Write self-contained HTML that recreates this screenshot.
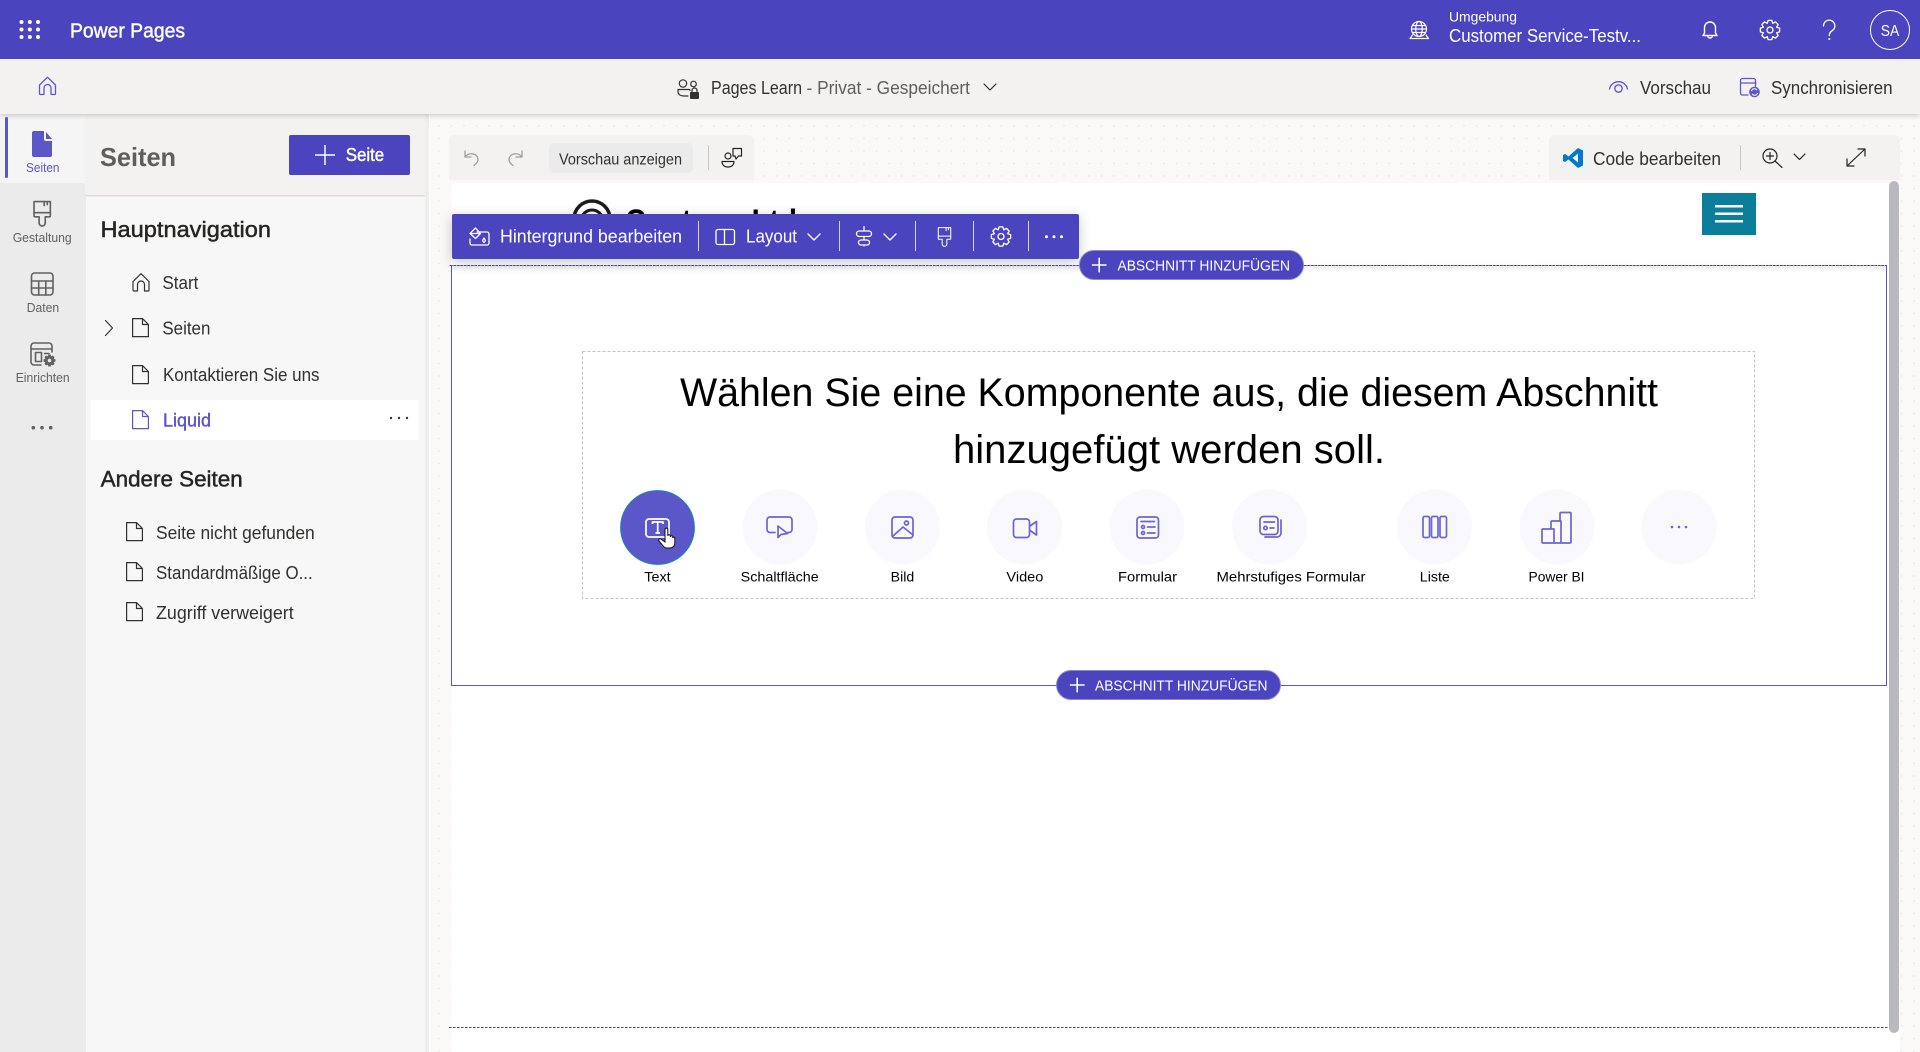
<!DOCTYPE html>
<html lang="de">
<head>
<meta charset="utf-8">
<title>Power Pages</title>
<style>
html,body{margin:0;padding:0;width:1920px;height:1052px;overflow:hidden;background:#fff}
svg{display:block}
text{font-family:"Liberation Sans",sans-serif;white-space:pre}
.s{stroke:currentColor;stroke-width:.45px}
.w{fill:none;stroke:#fff;stroke-width:1.3;stroke-linecap:round;stroke-linejoin:round}
.g{fill:none;stroke:#616161;stroke-width:1.6;stroke-linecap:round;stroke-linejoin:round}
.p{fill:none;stroke:#6a67d0;stroke-width:1.7;stroke-linecap:round;stroke-linejoin:round}
.b{fill:none;stroke:#5b57c8;stroke-width:1.3;stroke-linecap:round;stroke-linejoin:round}
.k{fill:none;stroke:#323130;stroke-width:1.2;stroke-linecap:round;stroke-linejoin:round}
.l{font-size:14px;fill:#000}
.n{font-size:18px;fill:#323130}
.r{font-size:13px;fill:#616161}
</style>
</head>
<body>
<svg xmlns="http://www.w3.org/2000/svg" width="1920" height="1052" viewBox="0 0 1920 1052">
<defs>
<pattern id="dots" width="12.5" height="12.5" patternUnits="userSpaceOnUse"><circle cx="1.5" cy="1" r=".9" fill="#e9e8e6"/></pattern>
<linearGradient id="fade" x1="0" y1="0" x2="0" y2="1"><stop offset="0" stop-color="#000" stop-opacity=".07"/><stop offset="1" stop-color="#000" stop-opacity="0"/></linearGradient>
<path id="gear" d="M9.62 -1.87L9.62 1.87 6.65 2.76 8.12 5.48 5.48 8.12 2.76 6.65 1.87 9.62 -1.87 9.62 -2.76 6.65 -5.48 8.12 -8.12 5.48 -6.65 2.76 -9.62 1.87 -9.62 -1.87 -6.65 -2.76 -8.12 -5.48 -5.48 -8.12 -2.76 -6.65 -1.87 -9.62 1.87 -9.62 2.76 -6.65 5.48 -8.12 8.12 -5.48 6.65 -2.76Z"/>
<path id="doc" d="M.6 .6H10.5L16.4 6.5V18.6H.6ZM10.5 .6V6.5H16.4"/>
<path id="home" d="M.5 8.5L8.5 .7 16.5 8.5V17a1 1 0 0 1-1 1H12V11.5a3.5 3.5 0 0 0-7 0V18H1.5a1 1 0 0 1-1-1Z"/>
<path id="brush" d="M1 1H17V15a1 1 0 0 1-1 1H12V22a3 3 0 0 1-6 0V16H2a1 1 0 0 1-1-1ZM1 12H17M11 1V5M14 1V4"/>
</defs>

<!-- canvas -->
<rect x="430" y="114" width="1490" height="938" fill="#faf9f8"/>
<rect x="430" y="114" width="1490" height="938" fill="url(#dots)"/>

<!-- canvas toolbars -->
<path d="M449 180V141a6 6 0 0 1 6-6H748a6 6 0 0 1 6 6V180Z" fill="#f3f2f1"/>
<path d="M1549 180V141a6 6 0 0 1 6-6H1894a6 6 0 0 1 6 6V180Z" fill="#f3f2f1"/>
<g fill="none" stroke="#a19f9d" stroke-width="1.3" stroke-linecap="round" stroke-linejoin="round">
<path d="M465 151v6h6M465 157c4-5 12-4 13 2 .4 3-2 5-4 6.500"/>
<path d="M522 151v6h-6M522 157c-4-5-12-4-13 2-.4 3 2 5 4 6.500"/>
</g>
<rect x="549" y="143" width="144" height="30" rx="5" fill="#ebebeb"/>
<text x="559" y="164.500" font-size="16" fill="#323130" textLength="123" lengthAdjust="spacingAndGlyphs">Vorschau anzeigen</text>
<rect x="708" y="145" width="1" height="25" fill="#c8c6c4"/>
<g class="k" style="stroke:#252423">
<circle cx="728" cy="156" r="3"/><path d="M722 161.500h12c0 3.500-2.500 5.500-6 5.500s-6-2-6-5.500Z"/>
<path d="M733 148.500h8.500v7.500h-3l-2.500 3-1-3h-2Z"/>
</g>
<path fill="#007acc" fill-rule="evenodd" d="M1578 148L1583 150.500V165.500L1578 168 1568.500 159.500 1565 162 1563 161V155L1565 154 1568.500 156.500ZM1578 153.500L1572.500 158 1578 162.500Z"/>
<text x="1593" y="165" font-size="18" fill="#323130" textLength="128" lengthAdjust="spacingAndGlyphs">Code bearbeiten</text>
<rect x="1740" y="145" width="1" height="25" fill="#c8c6c4"/>
<g class="k" style="stroke:#252423">
<circle cx="1770" cy="156" r="7"/><path d="M1775 161L1782 167.500M1770 152.500v7M1766.500 156h7"/>
<path d="M1794 154l5.500 5.500 5.500-5.500"/>
<path d="M1847 166L1865 149M1858 149h7v7M1847 159v7h7"/>
</g>

<!-- page frame -->
<rect x="451" y="183" width="1449" height="869" fill="#fff"/>
<rect x="1889" y="181" width="10" height="852" rx="5" fill="#b9b8be"/>
<rect x="1702" y="193" width="54" height="42" fill="#0a7e9a"/>
<g fill="#fff"><rect x="1715" y="205" width="28" height="2.500"/><rect x="1715" y="212.500" width="28" height="2.500"/><rect x="1715" y="220" width="28" height="2.500"/></g>
<g fill="none" stroke="#1b1b1b">
<circle cx="592" cy="219" r="18" stroke-width="3.500"/><circle cx="592" cy="221" r="11" stroke-width="3"/><circle cx="592" cy="223" r="5" stroke-width="2.500"/>
</g>
<text x="625" y="232" font-size="32" font-weight="700" fill="#000" textLength="172" lengthAdjust="spacingAndGlyphs">Contoso Ltd</text>

<!-- section -->
<rect x="451.500" y="265.500" width="1435" height="420" fill="#fff" stroke="#5b57c8"/>
<rect x="452" y="266" width="1434" height="6" fill="url(#fade)"/>
<path d="M449 265.500H1887" stroke="#4a45a0" stroke-width="1"/>
<path d="M449 265.500H1887" stroke="#fff" stroke-opacity=".6" stroke-width="1" stroke-dasharray="1 2.500"/>
<path d="M449 1027.500H1889" stroke="#555" stroke-width="1" stroke-dasharray="2.500 1.500"/>

<!-- component chooser -->
<rect x="582.500" y="351.500" width="1172" height="247" fill="none" stroke="#c4c4c4" stroke-dasharray="3 2"/>
<text x="680" y="406" font-size="40" fill="#000" textLength="978" lengthAdjust="spacingAndGlyphs">Wählen Sie eine Komponente aus, die diesem Abschnitt</text>
<text x="953" y="463" font-size="40" fill="#000" textLength="432" lengthAdjust="spacingAndGlyphs">hinzugefügt werden soll.</text>

<g fill="#f9f8fd">
<circle cx="780" cy="527" r="37.500"/><circle cx="902.500" cy="527" r="37.500"/><circle cx="1024.500" cy="527" r="37.500"/><circle cx="1147" cy="527" r="37.500"/><circle cx="1269.500" cy="527" r="37.500"/><circle cx="1434.500" cy="527" r="37.500"/><circle cx="1557" cy="527" r="37.500"/><circle cx="1679" cy="527" r="37.500"/>
</g>
<circle cx="657.500" cy="527.500" r="37" fill="#5b57c8" stroke="#0a93a8" stroke-width=".8"/>
<g fill="none" stroke="#fff" stroke-width="1.700" stroke-linejoin="round"><rect x="646" y="519" width="23" height="18" rx="3"/><path d="M652.500 524v-2h10.500v2M657.700 522v11M655.500 533h4.500"/></g>
<path d="M665 529.500c0-1.800 2.800-1.800 2.800 0V536c0-1.600 2.600-1.600 2.600 0v1c0-1.500 2.400-1.500 2.400 0v1c0-1.200 2-1.200 2 0V543c0 3-2 5-5 5h-3c-2 0-3-1-4-2.500L659 541c-1-1.800 1.200-3 2.400-1.600L665 542Z" fill="#fff" stroke="#111" stroke-width="1"/>

<g class="p">
<path d="M775 532.500H770a3 3 0 0 1-3-3V520a3 3 0 0 1 3-3H789a3 3 0 0 1 3 3V529.500a3 3 0 0 1-3 3h-1"/>
<path d="M778 526V537.500L781 534.500 787.500 533.500Z"/>
<rect x="892" y="517" width="21" height="21" rx="3"/><circle cx="906.500" cy="523" r="2"/><path d="M892.500 536.500L903 527l10 8"/>
<rect x="1013.500" y="519" width="16" height="18.500" rx="3"/><path d="M1030 526l6.500-4.500v13.500l-6.500-4.500"/>
<rect x="1137" y="517" width="21.500" height="21" rx="3"/><path d="M1141 521.500h13.500M1147.500 527h7.500M1147.500 533h7.500"/><circle cx="1143" cy="527" r="1.500"/><circle cx="1143" cy="533" r="1.500"/>
<rect x="1260" y="516.500" width="18" height="18" rx="3.500"/><path d="M1264 522h10.500M1270 528h4M1281 520v13a4 4 0 0 1-4 4h-12"/><circle cx="1265.500" cy="528" r="1.700"/>
<rect x="1423" y="516.500" width="6.500" height="21" rx="1.500"/><rect x="1431.500" y="516.500" width="6.500" height="21" rx="1.500"/><rect x="1440" y="516.500" width="6.500" height="21" rx="1.500"/>
<path d="M1542 530a1 1 0 0 1 1-1H1554V543H1543a1 1 0 0 1-1-1ZM1551 529V522a1 1 0 0 1 1-1H1561V543H1554M1560 521V513.500a1 1 0 0 1 1-1H1570a1 1 0 0 1 1 1V542a1 1 0 0 1-1 1H1561"/>
</g>
<g fill="#6a67d0"><circle cx="1672" cy="527" r="1.300"/><circle cx="1679" cy="527" r="1.300"/><circle cx="1686" cy="527" r="1.300"/></g>

<text class="l" x="644.300" y="581.500" textLength="26.400" lengthAdjust="spacingAndGlyphs">Text</text>
<text class="l" x="740.700" y="581.500" textLength="78" lengthAdjust="spacingAndGlyphs">Schaltfläche</text>
<text class="l" x="890.700" y="581.500" textLength="23.600" lengthAdjust="spacingAndGlyphs">Bild</text>
<text class="l" x="1006.400" y="581.500" textLength="37" lengthAdjust="spacingAndGlyphs">Video</text>
<text class="l" x="1118" y="581.500" textLength="59" lengthAdjust="spacingAndGlyphs">Formular</text>
<text class="l" x="1216.500" y="581.500" textLength="149" lengthAdjust="spacingAndGlyphs">Mehrstufiges Formular</text>
<text class="l" x="1419.800" y="581.500" textLength="30" lengthAdjust="spacingAndGlyphs">Liste</text>
<text class="l" x="1528.500" y="581.500" textLength="56" lengthAdjust="spacingAndGlyphs">Power BI</text>

<!-- section edit toolbar -->
<rect x="452" y="214" width="627" height="45" rx="2" fill="#4a45bf" style="filter:drop-shadow(0 3px 6px rgba(0,0,0,.22))"/>
<path d="M449 265.500H1079" stroke="#4a45a0" stroke-width="1"/>
<path d="M449 265.500H1079" stroke="#fff" stroke-opacity=".6" stroke-width="1" stroke-dasharray="1 2.500"/>
<g class="w">
<path d="M477 232h10a2 2 0 0 1 2 2v9a2 2 0 0 1-2 2H472a2 2 0 0 1-2-2v-4"/>
<path d="M475.500 228l-5.500 5.500 5.500 5 5-5ZM470 233.500h10.500M484 238c1.500 2 2 3 0 4.500-2-1.500-1.500-2.500 0-4.500Z"/>
<rect x="716" y="229.500" width="18.500" height="15" rx="2"/><path d="M724.500 229.500v15"/>
<path d="M808 234l6 6 6-6M884 234l6 6 6-6"/>
<path d="M864 226.500v4M864 236.500v3.500M864 245v1"/>
<rect x="856.500" y="231" width="15" height="5.500" rx="2.700"/><rect x="858.500" y="240" width="11" height="5" rx="2.500"/>
</g>
<text x="500" y="242.700" font-size="18" fill="#fff" textLength="182" lengthAdjust="spacingAndGlyphs">Hintergrund bearbeiten</text>
<text x="746" y="242.700" font-size="18" fill="#fff" textLength="51" lengthAdjust="spacingAndGlyphs">Layout</text>
<g fill="#d8d4cc"><rect x="698" y="221" width="1" height="30"/><rect x="839" y="221" width="1" height="30"/><rect x="915" y="221" width="1" height="30"/><rect x="973" y="221" width="1" height="30"/><rect x="1028" y="221" width="1" height="30"/></g>
<use href="#brush" class="w" transform="translate(937.500 226.800) scale(.78)"/>
<use href="#gear" class="w" transform="translate(1001 236.500)"/>
<circle cx="1001" cy="236.500" r="3" class="w"/>
<g fill="#fff"><circle cx="1046.500" cy="236.700" r="1.500"/><circle cx="1054" cy="236.700" r="1.500"/><circle cx="1061.500" cy="236.700" r="1.500"/></g>

<!-- add-section pills -->
<rect x="1079.500" y="250.500" width="224" height="29" rx="14.500" fill="#4a45bf" stroke="#8a87d6"/>
<path d="M1092.500 265H1106M1099.200 258.300V271.700" class="w" style="stroke-width:1.600"/>
<text x="1117.500" y="270.700" font-size="15" fill="#fff" textLength="172.500" lengthAdjust="spacingAndGlyphs">ABSCHNITT HINZUFÜGEN</text>
<rect x="1056.500" y="670.500" width="224" height="29" rx="14.500" fill="#4a45bf" stroke="#8a87d6"/>
<path d="M1070.500 685H1084M1077.200 678.300V691.700" class="w" style="stroke-width:1.600"/>
<text x="1095" y="690.700" font-size="15" fill="#fff" textLength="172.500" lengthAdjust="spacingAndGlyphs">ABSCHNITT HINZUFÜGEN</text>

<!-- left rail -->
<rect x="0" y="114" width="86" height="938" fill="#ebebeb"/>
<rect x="0" y="114" width="85" height="69" fill="#f5f5f5"/>
<rect x="5" y="117" width="3" height="61" rx="1.500" fill="#5b57c8"/>
<path fill="#5b57c8" d="M34 131h10v8a2 2 0 0 0 2 2h6v14a2 2 0 0 1-2 2H34a2 2 0 0 1-2-2V133a2 2 0 0 1 2-2Z"/>
<path fill="#5b57c8" d="M46 132l6 7h-6Z"/>
<text x="26" y="172" font-size="13" fill="#5b57c8" textLength="33.500" lengthAdjust="spacingAndGlyphs">Seiten</text>
<use href="#brush" class="g" transform="translate(33 200.500) scale(1.020)"/>
<text class="r" x="12.700" y="242" textLength="59" lengthAdjust="spacingAndGlyphs">Gestaltung</text>
<g class="g"><rect x="31.500" y="273" width="21.500" height="22" rx="3"/><path d="M31.500 281H53M31.500 288H53M38.700 281V295M45.800 281V295"/></g>
<text class="r" x="26.700" y="312" textLength="32.500" lengthAdjust="spacingAndGlyphs">Daten</text>
<g class="g"><path d="M41 365H34a3 3 0 0 1-3-3V346a3 3 0 0 1 3-3H49a3 3 0 0 1 3 3v6M31 349H52"/><rect x="35.500" y="352.500" width="6" height="9"/><path d="M44.500 353.500H49"/></g>
<use href="#gear" fill="#616161" transform="translate(49.500 360.500) scale(.62)"/>
<circle cx="49.500" cy="360.500" r="1.800" fill="#ebebeb"/>
<text class="r" x="15.700" y="382" textLength="54" lengthAdjust="spacingAndGlyphs">Einrichten</text>
<g fill="#616161"><circle cx="33.300" cy="427.700" r="1.800"/><circle cx="42" cy="427.700" r="1.800"/><circle cx="50.700" cy="427.700" r="1.800"/></g>

<!-- pages panel -->
<rect x="425" y="114" width="4" height="938" fill="#eeeeee"/>
<rect x="86" y="114" width="339" height="938" fill="#f7f7f7"/>
<rect x="85" y="114" width="340" height="81" fill="#f3f2f1"/>
<rect x="85" y="195" width="340" height="1.500" fill="#dfdddb"/>
<text x="100" y="166" font-size="26" font-weight="700" fill="#605e5c" textLength="76" lengthAdjust="spacingAndGlyphs">Seiten</text>
<rect x="289" y="135" width="121" height="40" rx="2" fill="#4a45bf"/>
<path d="M315 155H335M325 145V165" fill="none" stroke="#fff" stroke-width="1.400"/>
<text class="s" x="345.700" y="161" font-size="18" fill="#fff" color="#fff" textLength="38.500" lengthAdjust="spacingAndGlyphs">Seite</text>

<text class="s" x="100.500" y="237" font-size="22" fill="#252423" color="#252423" textLength="170.500" lengthAdjust="spacingAndGlyphs">Hauptnavigation</text>
<use href="#home" class="k" transform="translate(132.500 273)"/>
<text class="n" x="162.400" y="289" textLength="36" lengthAdjust="spacingAndGlyphs">Start</text>
<path d="M105.500 320.500L112.500 328 105.500 335.500" class="k"/>
<use href="#doc" class="k" transform="translate(132 318)"/>
<text class="n" x="162.400" y="334.500" textLength="48" lengthAdjust="spacingAndGlyphs">Seiten</text>
<use href="#doc" class="k" transform="translate(132 365)"/>
<text class="n" x="163" y="381" textLength="156.500" lengthAdjust="spacingAndGlyphs">Kontaktieren Sie uns</text>
<rect x="91" y="400" width="328" height="40" fill="#fff"/>
<use href="#doc" class="k" style="stroke:#5b57c8" transform="translate(132 410)"/>
<text class="s" x="163" y="426.500" font-size="18" fill="#5b57c8" color="#5b57c8" textLength="48" lengthAdjust="spacingAndGlyphs">Liquid</text>
<g fill="#323130"><circle cx="391" cy="418" r="1.200"/><circle cx="399" cy="418" r="1.200"/><circle cx="407" cy="418" r="1.200"/></g>
<text class="s" x="100.700" y="486.700" font-size="22" fill="#252423" color="#252423" textLength="142" lengthAdjust="spacingAndGlyphs">Andere Seiten</text>
<use href="#doc" class="k" transform="translate(126 522)"/>
<text class="n" x="156" y="538.800" textLength="158.700" lengthAdjust="spacingAndGlyphs">Seite nicht gefunden</text>
<use href="#doc" class="k" transform="translate(126 562)"/>
<text class="n" x="156" y="578.800" textLength="156.700" lengthAdjust="spacingAndGlyphs">Standardmäßige O...</text>
<use href="#doc" class="k" transform="translate(126 602)"/>
<text class="n" x="156" y="618.800" textLength="137.700" lengthAdjust="spacingAndGlyphs">Zugriff verweigert</text>

<!-- sub bar -->
<rect x="0" y="59" width="1920" height="55" fill="#f3f2f1" style="filter:drop-shadow(0 1px 3px rgba(0,0,0,.22))"/>
<use href="#home" class="b" transform="translate(39 76.500)"/>
<g class="k">
<circle cx="683" cy="83.500" r="3.700"/><circle cx="693.500" cy="84" r="2.800"/>
<path d="M678 89.500h11c.5 0 1 .5 1 1M678 89.500v2c0 3 2.500 4.500 6 4.500h4"/>
</g>
<rect x="690" y="92" width="9" height="7" rx="1" fill="#323130"/>
<path d="M692 92v-1.500a2.500 2.500 0 0 1 5 0V92" fill="none" stroke="#323130" stroke-width="1.200"/>
<text x="711" y="94" font-size="18" fill="#323130" textLength="91" lengthAdjust="spacingAndGlyphs">Pages Learn</text>
<text x="806.500" y="94" font-size="18" fill="#605e5c" textLength="163.500" lengthAdjust="spacingAndGlyphs">- Privat - Gespeichert</text>
<path d="M984 84l6 6 6-6" class="k"/>
<g class="b"><path d="M1609.500 89a9.200 9.200 0 0 1 18 0"/><circle cx="1618.500" cy="88.500" r="3.700"/></g>
<text class="n" x="1640" y="94" textLength="71" lengthAdjust="spacingAndGlyphs">Vorschau</text>
<g class="b"><path d="M1748 95h-5.500a2 2 0 0 1-2-2V80.500a2 2 0 0 1 2-2h11a2 2 0 0 1 2 2V87M1740.500 83h15.500"/></g>
<circle cx="1754.500" cy="92" r="5.300" fill="#5b57c8"/>
<path d="M1751.500 91a3 3 0 0 1 5.500-.8M1757.500 93a3 3 0 0 1-5.500.8" fill="none" stroke="#fff" stroke-width="1"/>
<text class="n" x="1771" y="94" textLength="121.500" lengthAdjust="spacingAndGlyphs">Synchronisieren</text>

<!-- header -->
<rect x="0" y="0" width="1920" height="59" fill="#4a45bf"/>
<g fill="#fff">
<circle cx="21.500" cy="22" r="2"/><circle cx="29.800" cy="22" r="2"/><circle cx="38" cy="22" r="2"/>
<circle cx="21.500" cy="29.500" r="2"/><circle cx="29.800" cy="29.500" r="2"/><circle cx="38" cy="29.500" r="2"/>
<circle cx="21.500" cy="37" r="2"/><circle cx="29.800" cy="37" r="2"/><circle cx="38" cy="37" r="2"/>
</g>
<text class="s" x="70" y="37.500" font-size="20" fill="#fff" color="#fff" textLength="115" lengthAdjust="spacingAndGlyphs">Power Pages</text>
<g class="w" style="stroke-width:1.200">
<circle cx="1419" cy="29" r="7.500"/><ellipse cx="1419" cy="29" rx="3.300" ry="7.500"/><path d="M1411.500 29h15M1412.500 25.500h13M1412.500 32.500h13"/>
<path d="M1412.500 35l-2.500 3.500h18.500l-2.500-3.500"/>
</g>
<text x="1449" y="21.500" font-size="14" fill="#fff" textLength="68" lengthAdjust="spacingAndGlyphs">Umgebung</text>
<text x="1449" y="42" font-size="18" fill="#fff" textLength="192" lengthAdjust="spacingAndGlyphs">Customer Service-Testv...</text>
<g class="w" style="stroke-width:1.400">
<path d="M1703 35.500h14l-1.500-2.500V27.500a5.500 5.500 0 0 0-11 0V33ZM1707.500 35.500a2.500 2.500 0 0 0 5 0"/>
</g>
<use href="#gear" class="w" transform="translate(1770 30)"/>
<circle cx="1770" cy="30" r="3" class="w"/>
<path d="M1823.500 26a5.700 5.700 0 1 1 8.500 4.800c-2 1.300-2.700 2.500-2.700 4.700" class="w"/>
<circle cx="1829.300" cy="39" r="1" fill="#fff"/>
<circle cx="1890" cy="30" r="19.500" fill="none" stroke="#fff" stroke-width="1"/>
<text x="1880.800" y="36" font-size="16" fill="#fff" textLength="18.500" lengthAdjust="spacingAndGlyphs">SA</text>
</svg>
</body>
</html>
